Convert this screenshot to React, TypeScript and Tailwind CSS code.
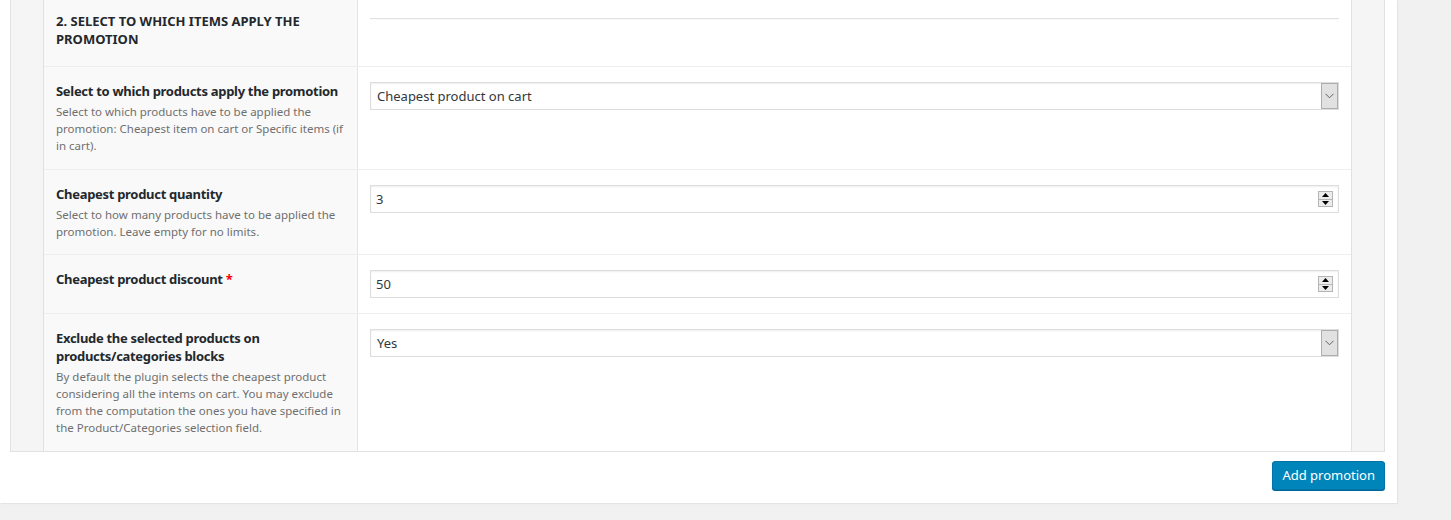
import React from "react";

const font = { fontFamily: '"Noto Sans", "Open Sans", sans-serif' };

function SelectBox({ value }: { value: string }) {
  return (
    <div className="flex h-[28px] w-full items-stretch border border-[#dddddd] bg-white shadow-[inset_0_1px_2px_rgba(0,0,0,0.07)]">
      <div className="flex flex-1 items-center pl-[6px] pt-[2px] text-[13px] text-[#32373c]">{value}</div>
      <div className="flex w-[17px] items-center justify-center border border-[#adadad] bg-[#e1e1e1]">
        <svg width="9" height="6" viewBox="0 0 9 6">
          <path d="M0.5 0.8 L4.5 4.8 L8.5 0.8" fill="none" stroke="#606060" strokeWidth="1" />
        </svg>
      </div>
    </div>
  );
}

function NumberBox({ value }: { value: string }) {
  return (
    <div className="flex h-[28px] w-full items-center border border-[#dddddd] bg-white pr-[5px] shadow-[inset_0_1px_2px_rgba(0,0,0,0.07)]">
      <div className="flex-1 pl-[5px] pt-[2px] text-[13px] text-[#32373c]">{value}</div>
      <div className="flex h-[16px] w-[15px] flex-col">
        <div className="flex flex-1 items-center justify-center border border-[#b5b5b5] bg-[#ececec]">
          <svg width="7" height="4" viewBox="0 0 7 4">
            <path d="M0 4 L3.5 0 L7 4 Z" fill="#000" />
          </svg>
        </div>
        <div className="flex flex-1 items-center justify-center border border-t-0 border-[#b5b5b5] bg-[#ececec]">
          <svg width="7" height="4" viewBox="0 0 7 4">
            <path d="M0 0 L3.5 4 L7 0 Z" fill="#000" />
          </svg>
        </div>
      </div>
    </div>
  );
}

function Row({
  title,
  required,
  desc,
  tight,
  children,
}: {
  title: React.ReactNode;
  required?: boolean;
  desc?: string;
  tight?: boolean;
  children: React.ReactNode;
}) {
  return (
    <div className="flex border-t border-[#eeeeee]">
      <div
        className={
          "w-[314px] shrink-0 border-r border-[#e5e5e5] bg-[#f9f9f9] px-[12px] pt-[15px] " +
          (tight ? "pb-[14px]" : "pb-[15px]")
        }
      >
        <div className="text-[13px] leading-[18px] font-bold tracking-[-0.3px] text-[#23282d]">
          {title}
          {required && <span className="text-[#ff0000]"> *</span>}
        </div>
        {desc && <div className="mt-[3px] text-[11.5px] leading-[17px] text-[#6f6f6f]">{desc}</div>}
      </div>
      <div className="flex-1 bg-white px-[12px] pt-[15px] pb-[15px]">{children}</div>
    </div>
  );
}

export default function App() {
  return (
    <div className="h-[520px] w-[1451px] bg-[#f1f1f1]" style={font}>
      <div className="w-[1397px] bg-white pb-[13px] shadow-[1px_1px_1px_rgba(0,0,0,0.05)]">
        <div className="ml-[10px] mr-[12px] border-x border-b border-[#e1e1e1] bg-[#f5f5f5] px-[32px]">
          <div className="border-x border-[#e1e1e1]">
            <div className="flex">
              <div className="w-[314px] shrink-0 border-r border-[#e5e5e5] bg-[#f9f9f9] px-[12px] pt-[12px] pb-[18px]">
                <div className="text-[13px] leading-[18px] font-bold uppercase text-[#23282d]">
                  2. Select to which items apply the promotion
                </div>
              </div>
              <div className="flex-1 bg-white px-[12px] pt-[18px]">
                <div className="h-[2px] border-t border-b border-t-[#e1e1e1] border-b-[#fafafa]" />
              </div>
            </div>
            <Row
              title="Select to which products apply the promotion"
              desc="Select to which products have to be applied the promotion: Cheapest item on cart or Specific items (if in cart)."
            >
              <SelectBox value="Cheapest product on cart" />
            </Row>
            <Row
              title="Cheapest product quantity"
              desc="Select to how many products have to be applied the promotion. Leave empty for no limits."
              tight
            >
              <NumberBox value="3" />
            </Row>
            <Row title="Cheapest product discount" required>
              <NumberBox value="50" />
            </Row>
            <Row
              title="Exclude the selected products on products/categories blocks"
              desc="By default the plugin selects the cheapest product considering all the intems on cart. You may exclude from the computation the ones you have specified in the Product/Categories selection field."
            >
              <SelectBox value="Yes" />
            </Row>
          </div>
        </div>
        <div className="mr-[12px] mt-[9px] flex justify-end">
          <button className="h-[29px] rounded-[3px] border border-[#0073aa] bg-[#0085ba] px-[9px] text-[13px] text-white shadow-[0_1px_0_#006799]">
            Add promotion
          </button>
        </div>
      </div>
    </div>
  );
}
